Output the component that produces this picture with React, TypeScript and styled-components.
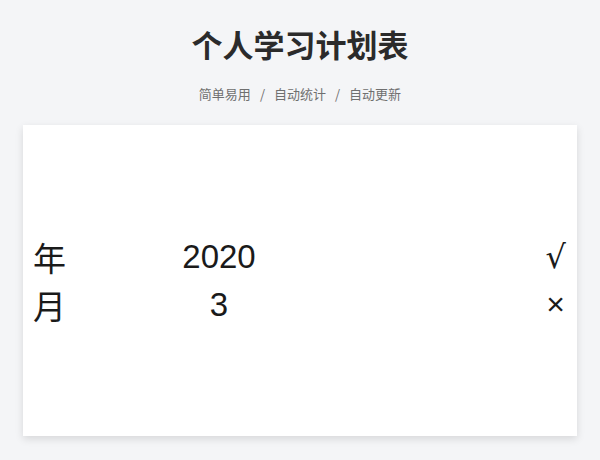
import styled, { createGlobalStyle } from 'styled-components';

const GlobalStyle = createGlobalStyle`
  html, body {
    margin: 0;
    padding: 0;
    background: #f4f5f7;
    font-family: "Noto Sans", "Noto Sans CJK SC", sans-serif;
  }
`;

const Page = styled.div`
  width: 600px;
  height: 460px;
  display: flex;
  flex-direction: column;
  align-items: center;
  box-sizing: border-box;
  padding-top: 24px;
`;

const Title = styled.h1`
  margin: 0;
  font-size: 31px;
  line-height: 40px;
  font-weight: 700;
  color: #2b2b2b;
  font-family: "Noto Sans CJK SC", sans-serif;
`;

const Subtitle = styled.div`
  margin-top: 20px;
  font-size: 13px;
  line-height: 20px;
  color: #6f6f6f;
  font-family: "Noto Sans CJK SC", sans-serif;
`;

const Sep = styled.span`
  margin: 0 9px;
`;

const Card = styled.div`
  margin-top: 21px;
  width: 554px;
  height: 311px;
  background: #ffffff;
  box-shadow: 0 3px 8px rgba(0, 0, 0, 0.12);
  display: flex;
  flex-direction: column;
  justify-content: center;
  padding: 0 10px;
  box-sizing: border-box;
`;

const Row = styled.div`
  display: grid;
  grid-template-columns: 100px 172px 1fr;
  align-items: center;
  height: 48px;
  font-size: 32px;
  color: #1a1a1a;
  font-family: "Liberation Sans", "Noto Sans CJK SC", sans-serif;
`;

const Label = styled.span`
  font-family: "Noto Sans CJK SC", sans-serif;
  font-size: 33px;
`;

const Value = styled.span`
  text-align: center;
  font-size: 33px;
`;

const Mark = styled.span<{ $small?: boolean }>`
  text-align: right;
  padding-right: ${(p) => (p.$small ? '2px' : '1px')};
  font-size: 32px;
  font-family: ${(p) => (p.$small ? '"Liberation Sans"' : '"DejaVu Sans"')}, sans-serif;
`;

const rows = [
  { label: '年', value: '2020', mark: '√' },
  { label: '月', value: '3', mark: '×' },
];

export default function App() {
  return (
    <>
      <GlobalStyle />
      <Page>
        <Title>个人学习计划表</Title>
        <Subtitle>
          简单易用<Sep>/</Sep>自动统计<Sep>/</Sep>自动更新
        </Subtitle>
        <Card>
          {rows.map((r) => (
            <Row key={r.label}>
              <Label>{r.label}</Label>
              <Value>{r.value}</Value>
              <Mark $small={r.mark === '×'}>{r.mark}</Mark>
            </Row>
          ))}
        </Card>
      </Page>
    </>
  );
}
